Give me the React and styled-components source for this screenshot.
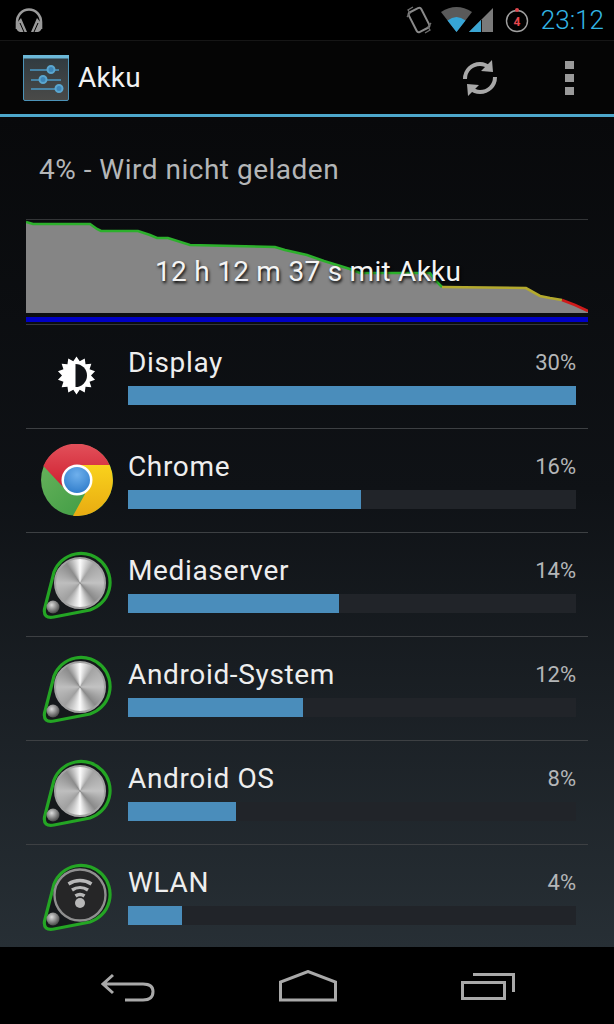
import React from "react";
import styled, { createGlobalStyle } from "styled-components";

const GlobalStyle = createGlobalStyle`
  html, body {
    margin: 0;
    background: #000;
    font-family: Roboto, "Liberation Sans", sans-serif;
  }
`;

const Phone = styled.div`
  width: 614px;
  height: 1024px;
  display: flex;
  flex-direction: column;
  overflow: hidden;
  background: #000;
`;

const StatusBar = styled.div`
  height: 40px;
  flex: none;
  display: flex;
  align-items: center;
  padding: 0 10px 0 15px;
  border-bottom: 1px solid #161616;
`;

const StatusRight = styled.div`
  margin-left: auto;
  display: flex;
  align-items: center;
`;

const Clock = styled.span`
  margin-left: 11px;
  font-size: 26px;
  font-weight: 300;
  line-height: 40px;
  color: #33b5e5;
`;

const ActionBar = styled.div`
  height: 73px;
  flex: none;
  display: flex;
  align-items: center;
  padding: 0 40px 0 23px;
  background: #050505;
  border-bottom: 3px solid #4da7cb;
`;

const ActionTitle = styled.span`
  margin-left: 9px;
  font-size: 28px;
  letter-spacing: 0.2px;
  color: #f2f2f2;
`;

const SyncButton = styled.svg`
  margin-left: auto;
  margin-right: 65px;
`;

const Overflow = styled.div`
  display: flex;
  flex-direction: column;
  gap: 5px;
`;

const Dot = styled.span`
  width: 9px;
  height: 8px;
  background: #9a9a9a;
`;

const Content = styled.div`
  height: 830px;
  flex: none;
  padding: 0 26px;
  box-sizing: border-box;
  background: linear-gradient(#08090b, #0f1216 45%, #272f35);
`;

const Summary = styled.div`
  padding: 37px 0 33px 13px;
  font-size: 28px;
  letter-spacing: 0.5px;
  line-height: 32px;
  color: #b4b6b8;
`;

const Chart = styled.div`
  position: relative;
  height: 93px;
  border-top: 1px solid #333537;
  svg {
    display: block;
  }
`;

const ChartLabel = styled.span`
  position: absolute;
  left: 129px;
  top: 36px;
  font-size: 28px;
  letter-spacing: 0.27px;
  line-height: 32px;
  white-space: nowrap;
  color: #f4f4f4;
  text-shadow: 1px 2px 3px #000;
`;

const PowerLine = styled.div`
  margin-top: 4px;
  height: 5px;
  background: #0000c4;
`;

const ChartEnd = styled.div`
  margin-top: 2px;
  height: 1px;
  background: #35383b;
`;

const Row = styled.div`
  height: 104px;
  box-sizing: border-box;
  display: flex;
  gap: 16px;
  padding: 0 12px 0 14px;
  border-bottom: 1px solid ${({ $last }) => ($last ? "transparent" : "#3d4043")};
`;

const IconSlot = styled.div`
  position: relative;
  flex: none;
  width: 72px;
  height: 72px;
  margin-top: 15px;
  svg {
    display: block;
  }
`;

const MetalDisc = styled.div`
  position: absolute;
  left: 14px;
  top: 9px;
  width: 52px;
  height: 52px;
  box-sizing: border-box;
  border-radius: 50%;
  border: 2px solid #a2a2a2;
  background: conic-gradient(
    #fbfbfb 0deg,
    #a4a4a4 35deg,
    #c2c2c2 90deg,
    #8a8a8a 140deg,
    #fbfbfb 180deg,
    #a0a0a0 220deg,
    #bebebe 270deg,
    #8c8c8c 325deg,
    #fbfbfb 360deg
  );
`;

const RowBody = styled.div`
  flex: 1;
  min-width: 0;
  padding-top: 21px;
`;

const RowHead = styled.div`
  display: flex;
  justify-content: space-between;
  align-items: center;
  height: 32px;
`;

const RowName = styled.span`
  font-size: 28px;
  letter-spacing: 0.65px;
  color: #eeeeee;
`;

const RowPercent = styled.span`
  font-size: 22px;
  color: #b4b6b8;
`;

const Track = styled.div`
  margin-top: 8px;
  height: 19px;
  background: #212429;
`;

const Fill = styled.div`
  height: 100%;
  width: ${({ $fill }) => $fill}%;
  background: #4a8dbb;
`;

const NavBar = styled.div`
  flex: 1;
  display: flex;
  justify-content: space-between;
  align-items: flex-start;
  padding: 26px 99px 0 101px;
  background: #000;
`;

const Headphones = () => (
  <svg width="28" height="25" viewBox="0 0 28 25">
    <path d="M2 21 V14 A12 12.5 0 0 1 26 14 V21" fill="none" stroke="#9a9a9a" strokeWidth="2.6" />
    <path d="M6 10 L12 24 H5 Q1 23 1 18 L2 15 Z M22 10 L16 24 H23 Q27 23 27 18 L26 15 Z" fill="#9a9a9a" />
    <path d="M5 15 L9 24 M23 15 L19 24" stroke="#000" strokeWidth="1" />
  </svg>
);

const VibrateIcon = () => (
  <svg width="26" height="28" viewBox="0 0 26 28">
    <rect x="6" y="3" width="14" height="22" rx="2.5" transform="rotate(-27 13 14)" fill="none" stroke="#8a8a8a" strokeWidth="2" />
    <path d="M7 1 L2 4 L4 7 L1 11 M19 27 L24 24 L22 21 L25 17" fill="none" stroke="#707070" strokeWidth="1.3" />
  </svg>
);

const WifiSignal = () => (
  <svg width="53" height="26" viewBox="0 0 53 26" style={{ marginLeft: 9 }}>
    <path d="M0 5 Q15.5 -5 31 5 L15.5 25 Z" fill="#5a5a5a" />
    <path d="M6.5 13.5 Q15.5 6.5 24.5 13.5 L15.5 25 Z" fill="#36a5d6" />
    <path d="M18 28 L38 3" stroke="#000" strokeWidth="3.5" />
    <path d="M52 1 V25 H28 Z" fill="#7a7a7a" />
    <path d="M28 25 L40 13 V25 Z" fill="#3aa6d4" />
    <path d="M40.5 13 V25" stroke="#111" strokeWidth="1" />
  </svg>
);

const TimerIcon = () => (
  <svg width="26" height="26" viewBox="0 0 26 26" style={{ marginLeft: 10 }}>
    <circle cx="13" cy="14" r="10.5" fill="none" stroke="#a0a0a0" strokeWidth="1.4" />
    <circle cx="13" cy="3" r="2" fill="#e0474f" />
    <text x="13" y="18.5" textAnchor="middle" fontSize="12" fontWeight="700" fontFamily="Roboto, sans-serif" fill="#e8474f">
      4
    </text>
  </svg>
);

const SettingsIcon = () => (
  <svg width="46" height="46" viewBox="0 0 46 46">
    <defs>
      <linearGradient id="settingsBody" x1="0" y1="0" x2="0" y2="1">
        <stop offset="0" stopColor="#2f3a40" />
        <stop offset="1" stopColor="#4a4a48" />
      </linearGradient>
    </defs>
    <rect x="0.5" y="0.5" width="45" height="45" rx="1.5" fill="url(#settingsBody)" stroke="#4c93b8" />
    <rect x="0" y="0" width="46" height="3.5" fill="#6cb8d8" />
    <g stroke="#4d9fce" strokeWidth="1.4">
      <path d="M7 15 H36" />
      <path d="M8 25 H38" />
      <path d="M8 34 H40" />
    </g>
    <g fill="#3d85b8" stroke="#5aa6cf" strokeWidth="2">
      <circle cx="28" cy="14.5" r="3.5" />
      <circle cx="20" cy="24.5" r="3.5" />
      <circle cx="36" cy="33.5" r="3.5" />
    </g>
  </svg>
);

const SyncIcon = () => (
  <SyncButton width="40" height="40" viewBox="0 0 40 40">
    <g fill="none" stroke="#a8a8a8" strokeWidth="4">
      <path d="M5 21 C5 12 12 6 20 6 C24 6 27 7.5 29.5 10" />
      <path d="M35 19 C35 28 28 34 20 34 C16 34 13 32.5 10.5 30" />
    </g>
    <path d="M32 2 L33 14 L21 13 Z M8 38 L7 26 L19 27 Z" fill="#a8a8a8" />
  </SyncButton>
);

const BatteryChart = () => (
  <svg width="562" height="93" viewBox="26 220 562 93">
    <path
      d="M26 222 L33 224 L90 224 L97 229 L101 231 L138 231 L150 235 L157 238 L168 238 L190 245 L275 247 L285 250 L307 255 L324 261 L350 269 L360 273 L430 273 L435 280 L442 287 L526 288 L540 296 L550 298 L562 300 L575 305 L588 311 V313 H26 Z"
      fill="#858585"
    />
    <g fill="none" strokeWidth="2.6">
      <path
        d="M26 222 L33 224 L90 224 L97 229 L101 231 L138 231 L150 235 L157 238 L168 238 L190 245 L275 247 L285 250 L307 255 L324 261 L350 269 L360 273 L430 273 L435 280 L442 287"
        stroke="#2cb02c"
      />
      <path d="M442 287 L526 288 L540 296 L550 298 L562 300" stroke="#b3a92e" />
      <path d="M562 300 L575 305 L588 311" stroke="#cf1b1b" />
    </g>
  </svg>
);

const DisplayIcon = () => {
  const points = [];
  for (let i = 0; i < 28; i++) {
    const a = (i * Math.PI) / 14;
    const r = i % 2 ? 14.5 : 19;
    points.push(`${36.5 + r * Math.sin(a)},${35.5 + r * Math.cos(a)}`);
  }
  return (
    <svg width="72" height="72" viewBox="0 0 72 72">
      <polygon points={points.join(" ")} fill="#fff" />
      <path d="M35.5 24 A11.5 11.5 0 0 1 35.5 47 Z" fill="#101317" />
    </svg>
  );
};

const ChromeIcon = () => (
  <svg width="72" height="72" viewBox="0 0 72 72" style={{ marginLeft: 0.5 }}>
    <defs>
      <linearGradient id="chromeRed" x1="0" y1="0" x2="0" y2="1">
        <stop offset="0" stopColor="#e2505a" />
        <stop offset="1" stopColor="#cf1f30" />
      </linearGradient>
      <linearGradient id="chromeYellow" x1="0" y1="0" x2="0" y2="1">
        <stop offset="0" stopColor="#f9d21c" />
        <stop offset="1" stopColor="#e8ab12" />
      </linearGradient>
      <linearGradient id="chromeGreen" x1="0" y1="0" x2="1" y2="1">
        <stop offset="0" stopColor="#6db65f" />
        <stop offset="1" stopColor="#37973f" />
      </linearGradient>
      <radialGradient id="chromeBlue" cx="0.5" cy="0.3" r="0.8">
        <stop offset="0" stopColor="#6fb0ec" />
        <stop offset="1" stopColor="#2a78c8" />
      </radialGradient>
    </defs>
    <circle cx="36" cy="36" r="36" fill="url(#chromeGreen)" />
    <path d="M36 36 L22 43 L2.4 22 A36 36 0 0 1 68.6 21 L36 21 Z" fill="url(#chromeRed)" />
    <path d="M36 21 L68.6 21 A36 36 0 0 1 32 71.8 L44 50 Z" fill="url(#chromeYellow)" />
    <circle cx="36" cy="36" r="15.5" fill="#fff" />
    <circle cx="36" cy="36" r="13" fill="url(#chromeBlue)" />
  </svg>
);

const PinIcon = ({ name, wifi }) => {
  const ball = `ball-${name}`;
  return (
    <>
      <svg width="72" height="72" viewBox="0 0 72 72">
        <defs>
          <radialGradient id={ball} cx="0.4" cy="0.35" r="0.7">
            <stop offset="0" stopColor="#dcdcdc" />
            <stop offset="1" stopColor="#3f3f3f" />
          </radialGradient>
        </defs>
        <path
          d="M14 24 A29 29 0 1 1 50 62 L14 69 Q3 71 4.5 61 Z"
          fill="#15181b"
          stroke="#24a524"
          strokeWidth="3.2"
        />
        {wifi && (
          <>
            <circle cx="40" cy="35" r="25.5" fill="#262627" stroke="#8f8f8f" strokeWidth="2.4" />
            <g fill="none" stroke="#b8b8b8" strokeWidth="3.4">
              <path d="M28.5 24 A21 21 0 0 1 51.5 24" />
              <path d="M32 30 A14.5 14.5 0 0 1 48 30" />
              <path d="M35.5 36 A8 8 0 0 1 44.5 36" />
            </g>
            <circle cx="40" cy="43" r="5" fill="#b8b8b8" />
          </>
        )}
        <circle cx="13" cy="59" r="6.5" fill={`url(#${ball})`} />
      </svg>
      {!wifi && <MetalDisc />}
    </>
  );
};

const BackIcon = () => (
  <svg width="54" height="30" viewBox="0 0 54 30">
    <path
      d="M12 2 L2 11 L12 20 M2 11 H42 Q52 11 52 18.5 Q52 27 42 27 H24"
      fill="none"
      stroke="#a9a9a9"
      strokeWidth="3"
    />
  </svg>
);

const HomeIcon = () => (
  <svg width="58" height="32" viewBox="0 0 58 32" style={{ marginTop: -3 }}>
    <path d="M1.5 30 V12 L29 1.5 L56.5 12 V30 Z" fill="none" stroke="#a9a9a9" strokeWidth="3" />
  </svg>
);

const RecentsIcon = () => (
  <svg width="54" height="28" viewBox="0 0 54 28">
    <rect x="1.5" y="9.5" width="42" height="16" fill="none" stroke="#a9a9a9" strokeWidth="3" />
    <path d="M12 1.5 H52.5 V19" fill="none" stroke="#a9a9a9" strokeWidth="3" />
  </svg>
);

const USAGE = [
  { name: "Display", percent: 30, fill: 100, icon: <DisplayIcon /> },
  { name: "Chrome", percent: 16, fill: 52, icon: <ChromeIcon /> },
  { name: "Mediaserver", percent: 14, fill: 47, icon: <PinIcon name="media" /> },
  { name: "Android-System", percent: 12, fill: 39, icon: <PinIcon name="system" /> },
  { name: "Android OS", percent: 8, fill: 24, icon: <PinIcon name="os" /> },
  { name: "WLAN", percent: 4, fill: 12, icon: <PinIcon name="wlan" wifi /> },
];

export default function App() {
  return (
    <Phone>
      <GlobalStyle />
      <StatusBar>
        <Headphones />
        <StatusRight>
          <VibrateIcon />
          <WifiSignal />
          <TimerIcon />
          <Clock>23:12</Clock>
        </StatusRight>
      </StatusBar>
      <ActionBar>
        <SettingsIcon />
        <ActionTitle>Akku</ActionTitle>
        <SyncIcon />
        <Overflow>
          <Dot />
          <Dot />
          <Dot />
        </Overflow>
      </ActionBar>
      <Content>
        <Summary>4% - Wird nicht geladen</Summary>
        <Chart>
          <BatteryChart />
          <ChartLabel>12 h 12 m 37 s mit Akku</ChartLabel>
        </Chart>
        <PowerLine />
        <ChartEnd />
        {USAGE.map((item, i) => (
          <Row key={item.name} $last={i === USAGE.length - 1}>
            <IconSlot>{item.icon}</IconSlot>
            <RowBody>
              <RowHead>
                <RowName>{item.name}</RowName>
                <RowPercent>{item.percent}%</RowPercent>
              </RowHead>
              <Track>
                <Fill $fill={item.fill} />
              </Track>
            </RowBody>
          </Row>
        ))}
      </Content>
      <NavBar>
        <BackIcon />
        <HomeIcon />
        <RecentsIcon />
      </NavBar>
    </Phone>
  );
}
